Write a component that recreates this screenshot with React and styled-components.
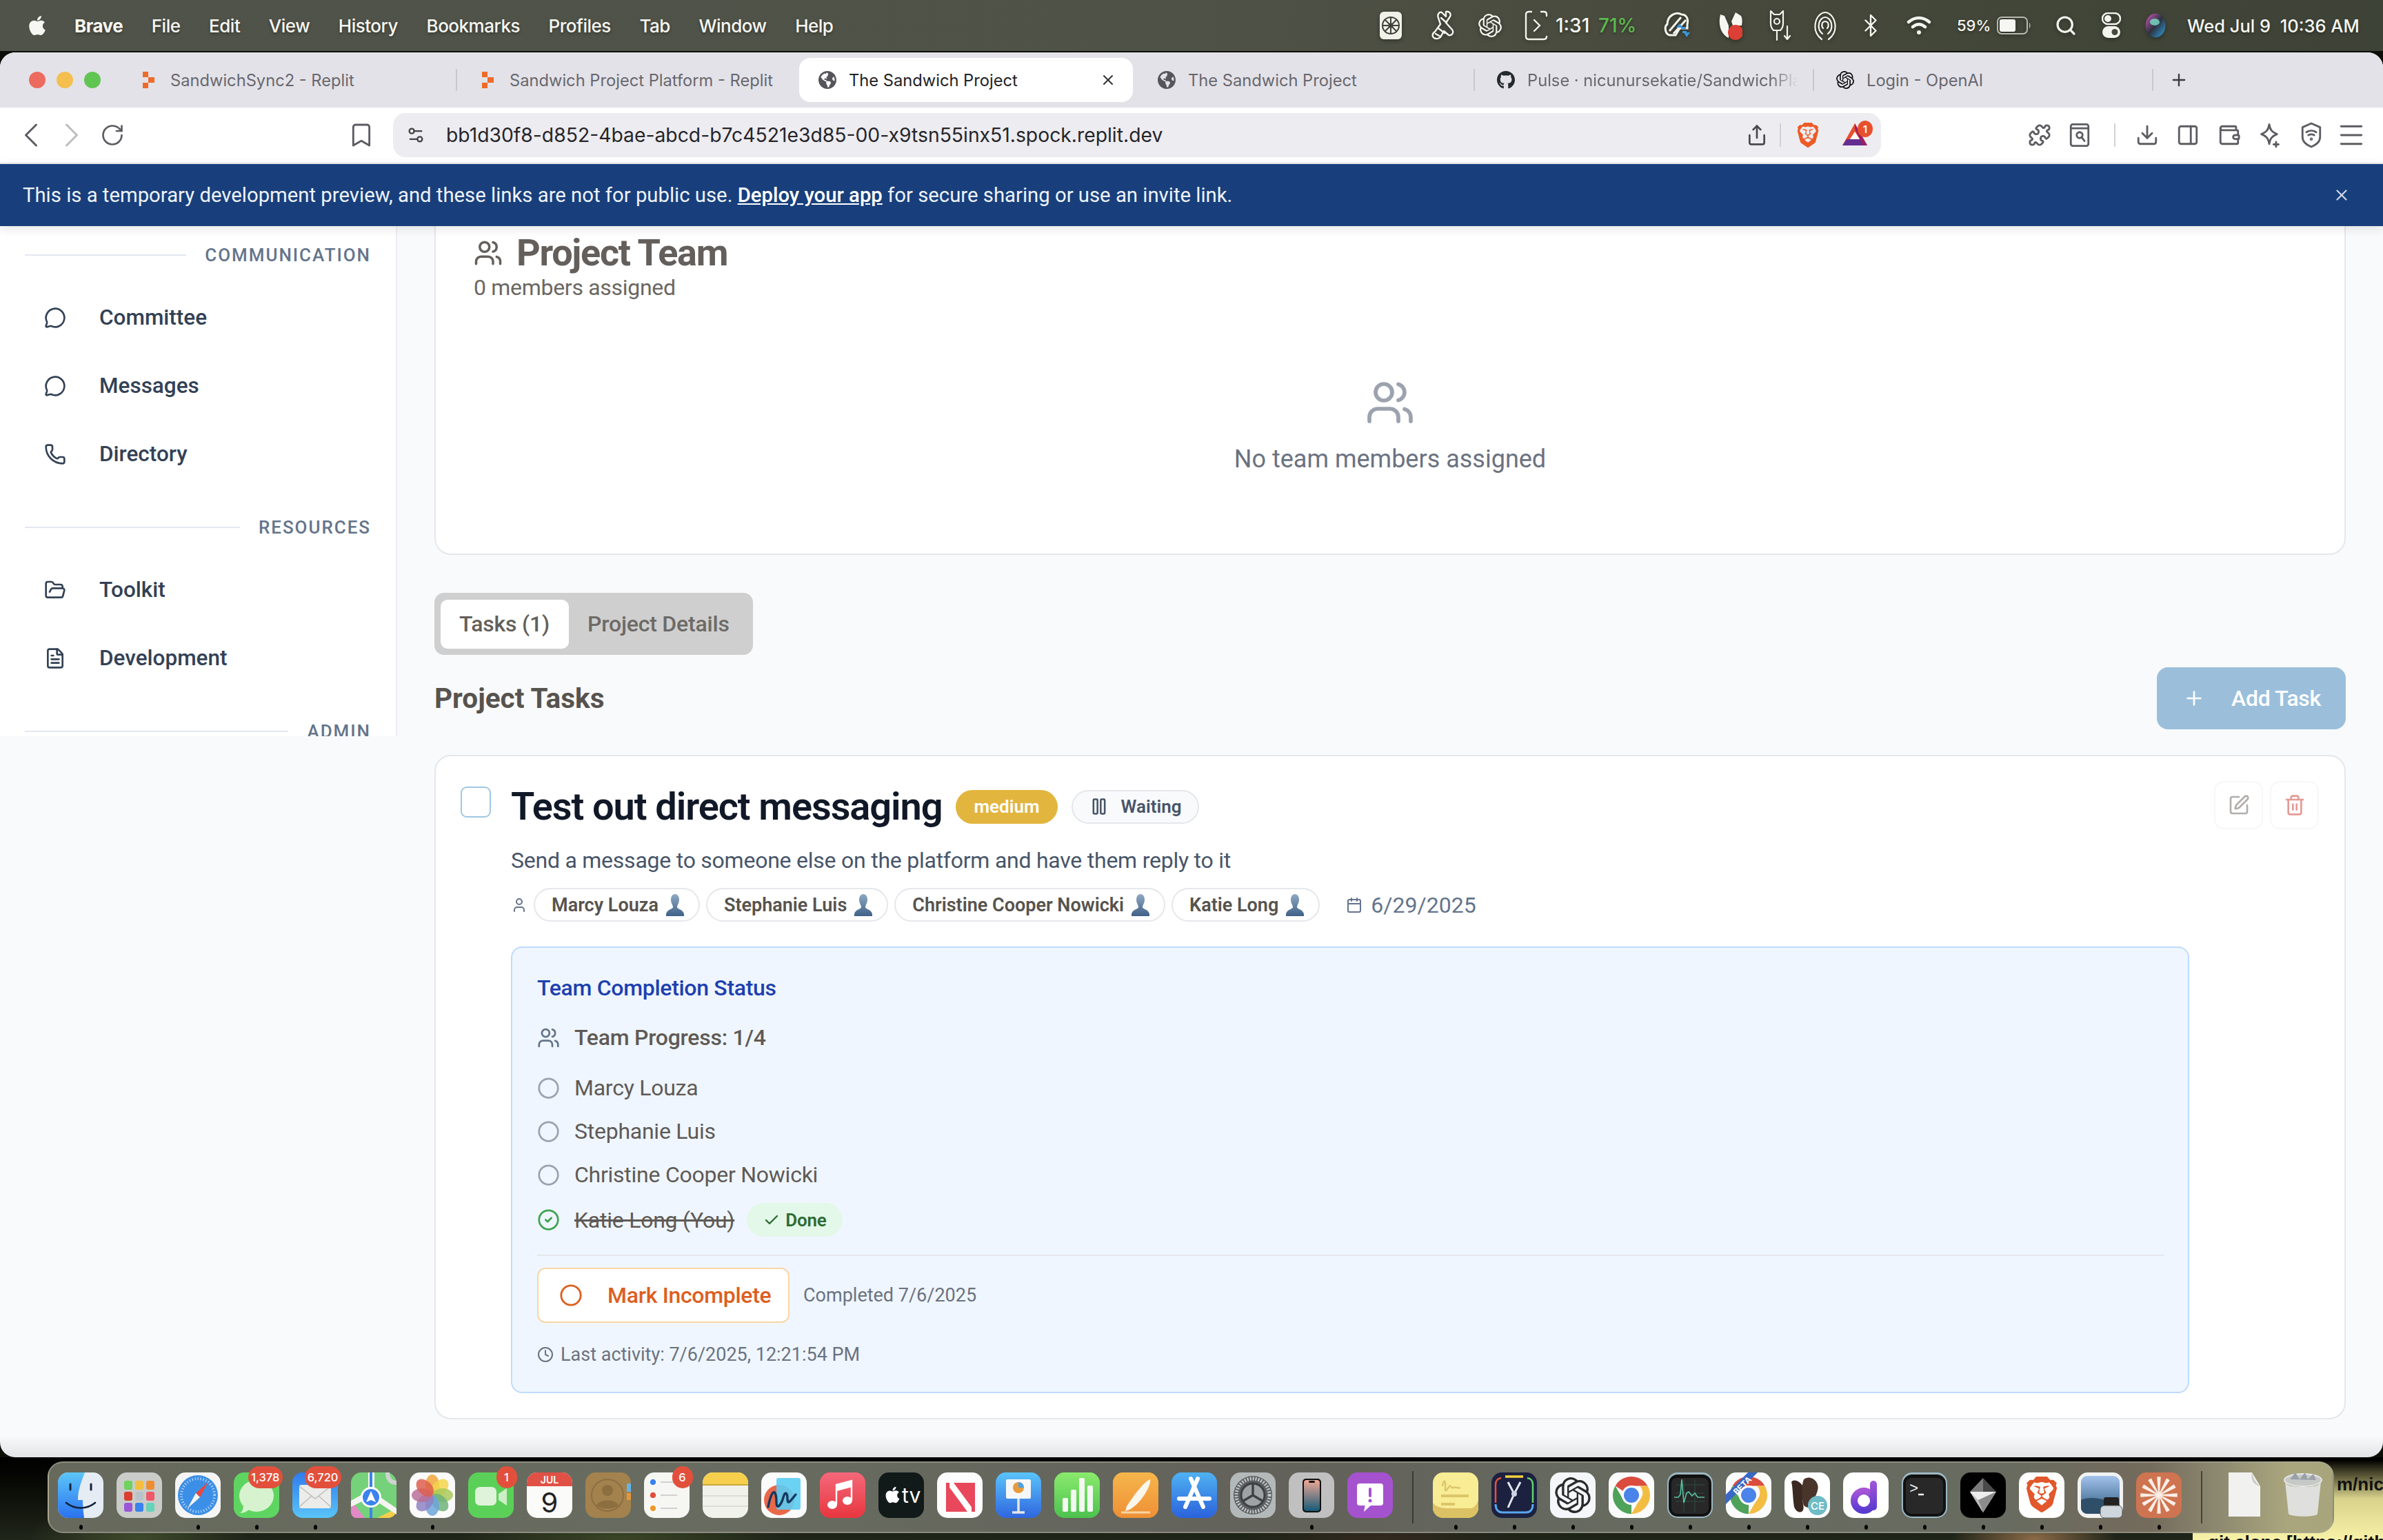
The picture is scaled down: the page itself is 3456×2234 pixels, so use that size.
import React from "react";
import styled, { createGlobalStyle } from "styled-components";
import {
  Bluetooth, Bookmark, Calendar, Check, ChevronLeft, ChevronRight, Circle, CircleCheck, Clock, Download,
  FileText, FolderOpen, Menu, MessageCircle, PanelRight, Pause, Phone, Plus, Puzzle, RotateCw, Search, Settings2,
  Share, SquarePen, Trash2, User, Users, Wallet, X,
} from "lucide-react";
import { FaApple, FaGithub, FaGlobeAmericas } from "react-icons/fa";
import { SiBrave, SiOpenai } from "react-icons/si";

const GlobalStyle = createGlobalStyle`
  html, body {
    margin: 0;
    width: 3456px;
    height: 2234px;
    overflow: hidden;
    background: #000;
  }
  * { box-sizing: border-box; }
`;

const CHROME_FONT = `Inter, "Liberation Sans", sans-serif`;
const APP_FONT = `Roboto, "Liberation Sans", sans-serif`;

const Screen = styled.div`
  position: relative;
  width: 3456px;
  height: 2234px;
  display: flex;
  flex-direction: column;
  overflow: hidden;
  background: #0c0e08;
`;

/* ---- what shows behind the dock ---- */
const Foliage = styled.div`
  position: absolute;
  left: 0;
  right: 276px;
  bottom: 0;
  height: 120px;
  background:
    radial-gradient(ellipse 160px 50px at 200px 118px, #3f4a2c, transparent),
    radial-gradient(ellipse 240px 40px at 900px 118px, #3b4526, transparent),
    radial-gradient(ellipse 200px 30px at 2000px 118px, #33291f, transparent),
    radial-gradient(ellipse 120px 40px at 2950px 118px, #8a6a48, transparent),
    linear-gradient(#000 0, #0b0d07 40%, #20261a 100%);
`;

const BackWindow = styled.div`
  position: absolute;
  left: 3180px;
  right: 0;
  bottom: 0;
  height: 120px;
  background: linear-gradient(#000 4px, #2a2818 14px, #d8d28c 60px, #f8f2a8 100%);
  font: 700 26px "Liberation Sans", sans-serif;
  color: #111;
`;

const BackLine = styled.span`
  position: absolute;
  white-space: nowrap;
  left: ${(p) => p.$x}px;
  top: ${(p) => p.$y}px;
`;

/* ---- macOS menu bar ---- */
const MenuBar = styled.div`
  position: relative;
  flex: none;
  height: 74px;
  display: flex;
  align-items: center;
  padding-left: 38px;
  background: linear-gradient(90deg, #50534a 0%, #4f5246 50%, #45483a 75%, #3e4337 100%);
  color: #f6f6f2;
  font: 500 26px ${CHROME_FONT};
  text-shadow: 0 2px 4px rgba(0, 0, 0, 0.35);
`;

const MenuItems = styled.div`
  display: flex;
  gap: 41.6px;
  margin-left: 38px;
  letter-spacing: -0.5px;
`;

const MenuItem = styled.span`
  font-weight: ${(p) => (p.$bold ? 700 : 500)};
`;

const StatusGroup = styled.div`
  margin-left: auto;
  padding-right: 34px;
  display: flex;
  align-items: center;
`;

const StatusIcon = styled.span`
  flex: none;
  width: ${(p) => p.$w || 36}px;
  height: 44px;
  margin-left: ${(p) => p.$m}px;
  display: flex;
  align-items: center;
  justify-content: center;
  color: #f4f4ee;
  filter: drop-shadow(0 2px 3px rgba(0, 0, 0, 0.35));
`;

const StatusText = styled.span`
  flex: none;
  width: ${(p) => p.$w}px;
  margin-left: ${(p) => p.$m}px;
  color: ${(p) => p.$color || "#f6f6f2"};
  font-size: ${(p) => p.$size || 25.5}px;
  white-space: nowrap;
`;

/* ---- browser window ---- */
const BrowserWindow = styled.div`
  position: relative;
  flex: none;
  margin-top: 2px;
  height: 2038px;
  display: flex;
  flex-direction: column;
  border-radius: 22px;
  overflow: hidden;
  background: #f9fafb;

  &::after {
    content: "";
    position: absolute;
    left: 0;
    right: 0;
    bottom: 0;
    height: 32px;
    background: linear-gradient(rgba(0, 0, 0, 0), rgba(0, 0, 0, 0.09));
    pointer-events: none;
  }
`;

const TabStrip = styled.div`
  flex: none;
  height: 80px;
  display: flex;
  align-items: center;
  padding-left: 42px;
  background: #e3e2e8;
`;

const TrafficLights = styled.div`
  flex: none;
  width: 129px;
  display: flex;
  gap: 16px;
`;

const Light = styled.span`
  width: 24px;
  height: 24px;
  border-radius: 50%;
  background: ${(p) => p.$color};
`;

const Tab = styled.div`
  position: relative;
  flex: none;
  width: 492px;
  height: 64px;
  display: flex;
  align-items: center;
  gap: 18px;
  padding: 0 24px 0 32px;
  font: 400 23.7px ${CHROME_FONT};
  color: ${(p) => (p.$active ? "#232327" : "#68686e")};
  background: ${(p) => (p.$active ? "#fff" : "transparent")};
  border-radius: ${(p) => (p.$active ? "16px" : "0")};
  margin: ${(p) => (p.$active ? "0 4px" : "0")};
  ${(p) => p.$active && "width: 484px; padding-left: 28px;"}

  &::after {
    content: "";
    display: ${(p) => (p.$sep ? "block" : "none")};
    position: absolute;
    right: 0;
    top: 16px;
    width: 2px;
    height: 32px;
    background: #c8c8ce;
  }
`;

const TabTitle = styled.span`
  flex: 1;
  min-width: 0;
  white-space: nowrap;
  overflow: hidden;
  ${(p) => p.$fade && "mask-image: linear-gradient(90deg, #000 90%, transparent 100%);"}
`;

const Favicon = styled.span`
  flex: none;
  width: 26px;
  height: 32px;
  display: flex;
  align-items: center;
  justify-content: center;
  color: #55555b;
`;

const NewTab = styled.span`
  margin-left: 23px;
  display: flex;
  color: #3a3a3f;
`;

const Toolbar = styled.div`
  flex: none;
  height: 80px;
  display: flex;
  align-items: center;
  padding-left: 27px;
  background: #fff;
`;

const ToolIcon = styled.span`
  flex: none;
  width: ${(p) => p.$w || 36}px;
  height: 40px;
  margin-left: ${(p) => p.$m || 0}px;
  display: flex;
  align-items: center;
  justify-content: center;
  color: ${(p) => p.$color || "#5c5c62"};

  svg { flex: none; }
`;

const ToolSep = styled.span`
  flex: none;
  width: 2px;
  height: 34px;
  margin-left: ${(p) => p.$m}px;
  background: #d2d2d6;
`;

const UrlBar = styled.div`
  flex: none;
  width: 2158px;
  height: 64px;
  margin-left: 28px;
  padding: 0 20px 0 18px;
  display: flex;
  align-items: center;
  border-radius: 18px;
  background: #edecf1;
`;

const UrlText = styled.span`
  margin-left: 29px;
  font: 400 28.3px ${CHROME_FONT};
  color: #26262a;
  white-space: nowrap;
`;

const UrlActions = styled.div`
  margin-left: auto;
  display: flex;
  align-items: center;
`;

const AlertBadge = styled.span`
  position: absolute;
  top: -4px;
  right: -8px;
  width: 22px;
  height: 24px;
  border-radius: 50%;
  background: #e8502c;
  color: #fff;
  font: 600 15px ${CHROME_FONT};
  display: flex;
  align-items: center;
  justify-content: center;
`;

const BatWrap = styled.span`
  position: relative;
  display: flex;
`;

const PreviewBanner = styled.div`
  position: relative;
  z-index: 2;
  flex: none;
  height: 92px;
  display: flex;
  align-items: center;
  justify-content: space-between;
  padding: 0 47px 0 33px;
  border-top: 2px solid #e4e4e6;
  background: #183f7c;
  box-shadow: 0 4px 14px rgba(0, 0, 0, 0.1);
  font: 400 29.3px ${APP_FONT};
  color: #eef2f8;

  a {
    color: #fff;
    text-decoration: underline;
    font-weight: 500;
  }
`;

const AppBody = styled.div`
  flex: 1;
  min-height: 0;
  display: flex;
  align-items: flex-start;
  font-family: ${APP_FONT};
`;

/* ---- sidebar ---- */
const Sidebar = styled.nav`
  flex: none;
  width: 576px;
  height: 740px;
  overflow: hidden;
  background: #fff;
  border-right: 2px solid #eceef1;
`;

const SectionLabel = styled.div`
  height: 40px;
  margin-top: ${(p) => p.$mt}px;
  margin-bottom: 21px;
  padding: 0 36px 0 36px;
  display: flex;
  align-items: center;
  gap: 27px;
  font-size: 26px;
  font-weight: 500;
  letter-spacing: 1.95px;
  color: #64748b;

  &::before {
    content: "";
    flex: 1;
    height: 2px;
    background: #e2e8f0;
  }
`;

const NavItem = styled.div`
  height: 99px;
  padding-left: 64px;
  display: flex;
  align-items: center;
  gap: 48px;
  font-size: 31.5px;
  font-weight: 500;
  color: #334155;
`;

/* ---- main column ---- */
const Main = styled.main`
  flex: 1;
  min-width: 0;
  padding: 0 54px;
`;

const TeamCard = styled.section`
  height: 477px;
  padding: 11px 0 0 55px;
  border: 2px solid #e5e7eb;
  border-top: 0;
  border-radius: 0 0 24px 24px;
  background: #fff;
`;

const TeamHeading = styled.h2`
  margin: 0;
  height: 56px;
  display: flex;
  align-items: center;
  gap: 20px;
  font-size: 54px;
  line-height: 56px;
  font-weight: 700;
  letter-spacing: -1.3px;
  color: #645f5b;
`;

const MembersCount = styled.p`
  margin: 2px 0 0;
  font-size: 32px;
  line-height: 40px;
  letter-spacing: -0.3px;
  color: #6b6762;
`;

const EmptyState = styled.div`
  margin: 111px 0 0 -55px;
  display: flex;
  flex-direction: column;
  align-items: center;
  gap: 22px;
  color: #9ca3af;
`;

const EmptyText = styled.div`
  font-size: 36px;
  line-height: 48px;
  color: #6b7280;
`;

const TabsList = styled.div`
  margin-top: 55px;
  width: 462px;
  height: 90px;
  padding: 9px;
  display: flex;
  align-items: center;
  border-radius: 14px;
  background: #cfcfcf;
`;

const TabButton = styled.div`
  flex: none;
  height: 71px;
  width: ${(p) => (p.$active ? 186 : 258)}px;
  padding: 0 27px;
  display: flex;
  align-items: center;
  border-radius: 10px;
  font-size: 32px;
  font-weight: 500;
  letter-spacing: -0.2px;
  white-space: nowrap;
  color: ${(p) => (p.$active ? "#645f5b" : "#6d6a66")};
  background: ${(p) => (p.$active ? "#fff" : "transparent")};
`;

const TasksHeader = styled.div`
  margin-top: 18px;
  display: flex;
  align-items: center;
  justify-content: space-between;
`;

const TasksTitle = styled.h3`
  margin: 0;
  font-size: 40.5px;
  font-weight: 700;
  color: #57534e;
`;

const AddTaskButton = styled.div`
  width: 274px;
  height: 90px;
  padding-left: 38px;
  display: flex;
  align-items: center;
  gap: 38px;
  border-radius: 16px;
  background: #9bbfdb;
  color: #fff;
  font-size: 32px;
  font-weight: 500;
  letter-spacing: -0.3px;
`;

const TaskCard = styled.article`
  margin-top: 37px;
  height: 964px;
  padding: 36px 37px 0 36px;
  display: flex;
  align-items: flex-start;
  border: 2px solid #e5e7eb;
  border-radius: 24px;
  background: #fff;
`;

const CheckBox = styled.span`
  flex: none;
  width: 44px;
  height: 45px;
  margin: 8px 29px 0 0;
  border: 2px solid #9fc8e2;
  border-radius: 9px;
`;

const TaskBody = styled.div`
  flex: 1;
  min-width: 0;
  margin-top: 9px;
`;

const TaskActions = styled.div`
  flex: none;
  margin-left: 36px;
  display: flex;
  gap: 10px;
`;

const ActionButton = styled.span`
  width: 71px;
  height: 70px;
  display: flex;
  align-items: center;
  justify-content: center;
  border: 2px solid #f7f7f8;
  border-radius: 14px;
  color: ${(p) => p.$color};
`;

const TitleRow = styled.div`
  height: 56px;
  display: flex;
  align-items: center;
  gap: 20px;
`;

const TaskTitle = styled.h4`
  margin: 0;
  font-size: 56px;
  line-height: 56px;
  font-weight: 600;
  letter-spacing: -1.1px;
  color: #111827;
  white-space: nowrap;
`;

const Pill = styled.span`
  height: 49px;
  display: inline-flex;
  align-items: center;
  border-radius: 25px;
  font-size: 26px;
  font-weight: 600;
  white-space: nowrap;
`;

const PriorityPill = styled(Pill)`
  padding: 0 26px;
  background: #e2b53e;
  color: #fff;
`;

const StatusPill = styled(Pill)`
  padding: 0 24px;
  gap: 18px;
  border: 2px solid #e5e7eb;
  background: #f9fafb;
  color: #475569;
`;

const Description = styled.p`
  margin: 28px 0 0;
  font-size: 32px;
  line-height: 44px;
  letter-spacing: -0.24px;
  color: #475569;
`;

const AssigneeRow = styled.div`
  margin-top: 18px;
  height: 49px;
  display: flex;
  align-items: center;
  gap: 9px;
  color: #64748b;
`;

const PersonChip = styled(Pill)`
  padding: 0 20px 0 24px;
  gap: 10px;
  border: 2px solid #e5e7eb;
  background: #fff;
  font-size: 27px;
  color: #57534e;
`;

const DueDate = styled.span`
  margin-left: 29px;
  display: flex;
  align-items: center;
  gap: 12px;
  font-size: 32px;
  color: #64748b;
`;

const CompletionBox = styled.section`
  margin-top: 36px;
  height: 648px;
  padding: 38px 34px 0 36px;
  border: 2px solid #bfdbfe;
  border-radius: 16px;
  background: #eff6ff;
`;

const CompletionTitle = styled.div`
  font-size: 32px;
  line-height: 40px;
  font-weight: 500;
  letter-spacing: -0.3px;
  color: #1e40af;
`;

const ProgressLine = styled.div`
  margin-top: 32px;
  height: 40px;
  display: flex;
  align-items: center;
  gap: 21px;
  font-size: 32px;
  font-weight: 500;
  letter-spacing: -0.25px;
  color: #5f5a56;
`;

const MemberList = styled.div`
  margin-top: 33px;
  display: flex;
  flex-direction: column;
  gap: 23px;
`;

const MemberRow = styled.div`
  min-height: ${(p) => (p.$done ? 49 : 40)}px;
  margin-top: ${(p) => (p.$done ? -2 : 0)}px;
  display: flex;
  align-items: center;
  gap: 21px;
  font-size: 32px;
  letter-spacing: -0.25px;
  color: #5f5a56;
`;

const MemberName = styled.span`
  text-decoration: ${(p) => (p.$done ? "line-through" : "none")};
`;

const DonePill = styled(Pill)`
  margin-left: -3px;
  padding: 0 24px;
  gap: 8px;
  background: #e3f8e8;
  color: #2e6b34;
`;

const Divider = styled.hr`
  margin: 26px 0 17px;
  border: 0;
  height: 2px;
  background: #e5e7eb;
`;

const CompleteRow = styled.div`
  display: flex;
  align-items: center;
  gap: 20px;
`;

const MarkButton = styled.div`
  width: 366px;
  height: 80px;
  padding-left: 30px;
  display: flex;
  align-items: center;
  gap: 36px;
  border: 2px solid #fbd5a5;
  border-radius: 12px;
  background: #fff;
  font-size: 32px;
  font-weight: 500;
  letter-spacing: -0.3px;
  color: #dd5f1f;
`;

const MutedText = styled.span`
  font-size: 27px;
  color: #6b7280;
`;

const LastActivity = styled(MutedText)`
  margin-top: 28px;
  height: 36px;
  display: flex;
  align-items: center;
  gap: 10px;
`;

/* ---- dock ---- */
const Dock = styled.div`
  position: relative;
  flex: none;
  margin: 6px 0 0 69px;
  width: 3316px;
  height: 104px;
  padding: 14px 0 0 3.5px;
  display: flex;
  border: 2px solid rgba(170, 170, 155, 0.55);
  border-radius: 22px;
  background: linear-gradient(90deg, #66695c 0%, #686c60 30%, #62615a 55%, #666a5f 68%, #676b60 85%, #746b5c 92%, #8d8970 95%, #a9a67e 98%, #a8a57c 100%);
`;

const DockSlot = styled.div`
  position: relative;
  flex: none;
  width: 85px;
  display: flex;
  flex-direction: column;
  align-items: center;
`;

const DockDivider = styled.span`
  flex: none;
  width: 2px;
  height: 76px;
  margin: -2px 18.5px 0;
  background: rgba(40, 40, 34, 0.7);
`;

const RunDot = styled.span`
  width: 5px;
  height: 7px;
  margin-top: 10px;
  border-radius: 50%;
  background: #000;
`;

const DockBadge = styled.span`
  position: absolute;
  top: -9px;
  right: ${(p) => p.$right || 5}px;
  min-width: 30px;
  height: 32px;
  padding: 0 4px;
  display: flex;
  align-items: center;
  justify-content: center;
  border-radius: 16px;
  background: #e2503c;
  color: #fff;
  font: 500 16.5px ${CHROME_FONT};
`;

/* ---- small drawings ---- */
const ReplitMark = () => (
  <svg width="18" height="24" viewBox="0 0 18 24" fill="#ee6b2a">
    <path d="M0 0h8v8H0zM8 8h9v8H8zM0 16h8v8H0z" />
  </svg>
);

const BatIcon = () => (
  <svg width="36" height="34" viewBox="0 0 36 34">
    <path d="M18 0 36 32H0z" fill="#e8502c" />
    <path d="M18 12 27 26H9z" fill="#fff" />
    <path d="M0 32l6-9h24l6 9z" fill="#662d91" />
    <path d="M18 0l18 32h-6L18 8z" fill="#9e1f63" />
  </svg>
);

const Stroke = ({ children, w = 34, h = 34, vb = "0 0 24 24", sw = 2 }) => (
  <svg width={w} height={h} viewBox={vb} fill="none" stroke="currentColor" strokeWidth={sw} strokeLinecap="round" strokeLinejoin="round">
    {children}
  </svg>
);

const StatusIcons = {
  wheel: (
    <svg width="32" height="40" viewBox="0 0 32 40">
      <rect width="32" height="40" rx="6" fill="#f1f1ea" />
      <circle cx="16" cy="20" r="12" fill="none" stroke="#3f4236" strokeWidth="2" />
      <circle cx="16" cy="20" r="3.5" fill="#3f4236" />
      <path d="M16 8v24M4 20h24M7.5 11.5l17 17M24.5 11.5l-17 17" stroke="#3f4236" strokeWidth="2" />
    </svg>
  ),
  knot: (
    <svg width="34" height="44" viewBox="0 0 34 44" fill="none" stroke="#f4f4ee" strokeWidth="2.4" strokeLinecap="round" strokeLinejoin="round">
      <path d="M21 2c5-1 8 3 6 7l-6 9 9 10c3 4 0 9-5 8l-7-6-5 9c-3 3-9 3-11-1-1-3 0-5 3-7l8-11-3-9c-2-5 1-9 5-8l6 6z" />
      <path d="M14 11l8 7M10 26l9 7M6 34l7 4" />
    </svg>
  ),
  replay: (
    <svg width="34" height="44" viewBox="0 0 34 44" fill="none" stroke="currentColor" strokeWidth="2.4" strokeLinecap="round">
      <path d="M10 2H6C3 2 2 4 2 6v32c0 3 1 4 4 4h22c3 0 4-1 4-4M24 2h4c3 0 4 2 4 4v2" />
      <path d="m14 14 8 8-8 8" />
    </svg>
  ),
  cloud: (
    <svg width="46" height="44" viewBox="0 0 46 44">
      <path d="M10 36C3 35 1 24 6 20 6 8 18 1 27 6c7 0 10 7 8 14v6H24l-6 10z" fill="none" stroke="#f4f4ee" strokeWidth="3" />
      <path d="M9 30 26 10M15 34 33 14" stroke="#f4f4ee" strokeWidth="3" />
      <path d="M28 25h-9l5-6zM30 32h9l-5 7z" fill="#3b97de" />
      <path d="M26 24h7v3h-7zM28 30h6v3h-6z" fill="#3b97de" />
    </svg>
  ),
  malware: (
    <svg width="34" height="44" viewBox="0 0 34 44">
      <path d="M2 6c-3 12-1 28 12 34V22L8 8z" fill="#f6f6f2" />
      <path d="M32 8c2 4 2 8 1 14H20l-2-6 6-13z" fill="#f6f6f2" />
      <circle cx="24" cy="32" r="11" fill="#dc3f35" />
    </svg>
  ),
  cat: (
    <svg width="34" height="46" viewBox="0 0 34 46" fill="none" stroke="#f4f4ee" strokeWidth="2.2" strokeLinecap="round" strokeLinejoin="round">
      <path d="M4 2l5 5h8l5-5v18c0 6-2 8-4 10H8c-2-2-4-4-4-10z" />
      <circle cx="13" cy="17" r="4" />
      <path d="M13 30v14M28 24v18M24 38l4 5 4-5" />
    </svg>
  ),
  airdrop: (
    <svg width="32" height="44" viewBox="0 0 32 44" fill="none" stroke="#f4f4ee" strokeWidth="2.2" strokeLinecap="round">
      <path d="M11 42C3 36 0 28 2 18 4 8 11 3 16 3s12 5 14 15c2 10-1 18-9 24" />
      <path d="M12 34c-5-4-6-10-5-15 1-5 5-9 9-9s8 4 9 9c1 5 0 11-5 15" />
      <path d="M13 26c-2-2-2-5-1-8 1-1 2-2 4-2s3 1 4 2c1 3 1 6-1 8" />
    </svg>
  ),
  wifi: (
    <svg width="36" height="30" viewBox="0 0 36 30" fill="none" stroke="#f4f4ee" strokeWidth="4.4" strokeLinecap="round">
      <path d="M3 10c9-8 21-8 30 0M9 17c6-5 12-5 18 0" />
      <circle cx="18" cy="25" r="3" fill="#f4f4ee" stroke="none" />
    </svg>
  ),
  battery: (
    <svg width="50" height="26" viewBox="0 0 50 26">
      <rect x="1" y="1" width="43" height="24" rx="6" fill="none" stroke="#b8b9b0" strokeWidth="2" />
      <rect x="4" y="4" width="23" height="18" rx="3" fill="#f6f6f2" />
      <path d="M47 9c2 1 2 7 0 8z" fill="#b8b9b0" />
    </svg>
  ),
  control: (
    <svg width="28" height="38" viewBox="0 0 28 38">
      <rect x="1" y="1" width="26" height="16" rx="8" fill="none" stroke="#f4f4ee" strokeWidth="2.4" />
      <circle cx="9" cy="9" r="5" fill="#f4f4ee" />
      <rect x="1" y="20" width="26" height="17" rx="8.5" fill="#f4f4ee" />
      <circle cx="19" cy="28.5" r="4.5" fill="#45483a" />
    </svg>
  ),
  siri: (
    <svg width="30" height="36" viewBox="0 0 30 36">
      <defs>
        <linearGradient id="siriA" x1="0" y1="0" x2="1" y2="1">
          <stop offset="0" stopColor="#d45ac0" />
          <stop offset="0.5" stopColor="#2e3140" />
          <stop offset="1" stopColor="#2fa4e0" />
        </linearGradient>
      </defs>
      <ellipse cx="15" cy="18" rx="14.5" ry="17.5" fill="url(#siriA)" />
      <ellipse cx="14" cy="13" rx="7" ry="5" fill="#7be0c8" opacity="0.8" />
    </svg>
  ),
};

const ReaderIcon = () => (
  <Stroke w={34} h={38} vb="0 0 24 26">
    <rect x="3" y="2" width="18" height="22" rx="2" />
    <path d="M3 6h18" />
    <circle cx="12" cy="13" r="3" />
    <path d="m14 15 3 4" />
  </Stroke>
);

const SparkleIcon = () => (
  <Stroke w={34} h={38} vb="0 0 24 26">
    <path d="M12 2c1 6 3 8 8 10-5 2-7 4-8 10-1-6-3-8-8-10 5-2 7-4 8-10z" />
    <path d="M19 20v5M16.5 22.5h5" />
  </Stroke>
);

const ShieldIcon = () => (
  <Stroke w={34} h={40} vb="0 0 24 28">
    <path d="M12 2 21 6v10c0 5-4 8-9 10-5-2-9-5-9-10V6z" />
    <path d="M7 11c3-2 7-2 10 0M9 14c2-1 4-1 6 0" />
    <circle cx="12" cy="18" r="0.6" />
  </Stroke>
);

const PersonEmoji = () => (
  <svg width="28" height="32" viewBox="0 0 28 32">
    <defs>
      <linearGradient id="bust" x1="0" y1="0" x2="0" y2="1">
        <stop offset="0" stopColor="#8fa9c4" />
        <stop offset="1" stopColor="#3f6288" />
      </linearGradient>
    </defs>
    <path d="M14 0c4 0 6 4 6 8 0 5-3 8-3 11 0 3 9 3 10 10v3H1v-3c1-7 10-7 10-10 0-3-3-6-3-11 0-4 2-8 6-8z" fill="url(#bust)" />
  </svg>
);

const Tile = ({ children, fill }) => (
  <svg width="66" height="66" viewBox="0 0 66 66" style={{ display: "block" }}>
    <rect width="66" height="66" rx="15" fill={fill} />
    {children}
  </svg>
);

const Grad = ({ id, a, b, x2 = 0, y2 = 1 }) => (
  <defs>
    <linearGradient id={id} x1="0" y1="0" x2={x2} y2={y2}>
      <stop offset="0" stopColor={a} />
      <stop offset="1" stopColor={b} />
    </linearGradient>
  </defs>
);

const ChromeWheel = () => (
  <g>
    <path d="M33 6a27 27 0 0 1 23.4 13.5H33a13.5 13.5 0 0 0-12 7.4L9.6 19.5A27 27 0 0 1 33 6z" fill="#db4b3e" />
    <path d="M56.4 19.5A27 27 0 0 1 33 60l11.7-20.2a13.5 13.5 0 0 0 0-20.3z" fill="#f3bd42" />
    <path d="M9.6 19.5 21 39.5a13.5 13.5 0 0 0 12 7l-0 13.5A27 27 0 0 1 9.6 19.5z" fill="#4ea25a" />
    <circle cx="33" cy="33" r="14" fill="#fff" />
    <circle cx="33" cy="33" r="11" fill="#4a84ea" />
  </g>
);

const TerminalScreen = ({ children }) => (
  <Tile fill="#9db8c4">
    <rect x="2" y="3" width="62" height="61" rx="13" fill="#111" />
    <rect x="6" y="8" width="54" height="52" rx="8" fill="#282828" />
    {children}
  </Tile>
);

const dockApps = [
  {
    dot: true,
    art: (
      <Tile fill="#e6ecf4">
        <Grad id="fnd" a="#5cc6f9" b="#2a72ef" />
        <path d="M15 0h24c-6 16-10 26-10 40h7c0 10 1 18 2 26H15A15 15 0 0 1 0 51V15A15 15 0 0 1 15 0z" fill="url(#fnd)" />
        <path d="M18 17v8M48 17v8" stroke="#14233c" strokeWidth="3" strokeLinecap="round" />
        <path d="M12 44c12 10 30 10 42 0" fill="none" stroke="#14233c" strokeWidth="2.6" strokeLinecap="round" />
      </Tile>
    ),
  },
  {
    art: (
      <Tile fill="#c9ccc8">
        {["#6fd25c", "#f5be3c", "#ee8e34", "#d9402f", "#b9c2c6", "#ef5a6a", "#9a55d8", "#3a82ee", "#66d3b8"].map((c, i) => (
          <rect key={c} x={11 + (i % 3) * 16} y={12 + Math.floor(i / 3) * 16} width="12" height="13" rx="3" fill={c} />
        ))}
      </Tile>
    ),
  },
  {
    dot: true,
    art: (
      <Tile fill="#f5f5f5">
        <circle cx="33" cy="33" r="29" fill="#3c8fe6" />
        <circle cx="33" cy="33" r="24" fill="none" stroke="#d5e7fa" strokeWidth="4" strokeDasharray="1 3" />
        <path d="M48 14 30 30l6 6z" fill="#e8473b" />
        <path d="M18 52 30 30l6 6z" fill="#f4f4f4" />
      </Tile>
    ),
  },
  {
    dot: true,
    badge: "1,378",
    art: (
      <Tile fill="#5fd561">
        <ellipse cx="33" cy="34" rx="25" ry="23" fill="#d6f2cf" />
        <path d="M14 48c0 6-2 9-5 11 6 0 11-3 14-6z" fill="#d6f2cf" />
      </Tile>
    ),
  },
  {
    dot: true,
    badge: "6,720",
    art: (
      <Tile fill="#3b8af0">
        <Grad id="mail" a="#2f7bee" b="#5ac4f8" />
        <rect width="66" height="66" rx="15" fill="url(#mail)" />
        <rect x="10" y="18" width="46" height="34" rx="3" fill="#ececea" />
        <path d="m10 20 23 18 23-18M10 50l18-16M56 50 38 34" fill="none" stroke="#bdbdb9" strokeWidth="1.5" />
      </Tile>
    ),
  },
  {
    art: (
      <Tile fill="#75d27a">
        <path d="M0 40 20 66H8A8 8 0 0 1 0 58z" fill="#e38ac6" />
        <path d="M38 66h16c6 0 12-5 12-12v-2z" fill="#f3cf4b" />
        <path d="M25 0h9v30l32 22v9L28 36 0 50v-9l25-14z" fill="#f4f4f0" />
        <path d="M27 0h4v66h-4z" fill="#3b82ee" />
        <path d="M50 0c0 12 6 18 16 18v-6c-6 0-10-5-10-12z" fill="#cfd3cf" />
        <circle cx="29" cy="36" r="15" fill="#fff" />
        <circle cx="29" cy="36" r="12" fill="#3b82ee" />
        <path d="M29 27 36 43l-7-3-7 3z" fill="#fff" />
      </Tile>
    ),
  },
  {
    dot: true,
    art: (
      <Tile fill="#fbfbfb">
        {[
          ["#f0a63c", 0], ["#f3d54a", 45], ["#a9c95a", 90], ["#6fb37a", 135],
          ["#6ca6dc", 180], ["#8f81c4", 225], ["#b96f98", 270], ["#dd5f4f", 315],
        ].map(([c, r]) => (
          <ellipse key={r} cx="33" cy="18" rx="10" ry="15" fill={c} opacity="0.85" transform={`rotate(${r} 33 33)`} />
        ))}
      </Tile>
    ),
  },
  {
    badge: "1",
    badgeRight: 0,
    art: (
      <Tile fill="#5bd058">
        <rect x="10" y="21" width="31" height="27" rx="7" fill="#dff3da" />
        <path d="m44 31 12-8v25l-12-8z" fill="#cdeec6" />
      </Tile>
    ),
  },
  {
    art: (
      <Tile fill="#fbfbf9">
        <path d="M0 20V15A15 15 0 0 1 15 0h36a15 15 0 0 1 15 15v5z" fill="#e05045" />
        <text x="33" y="16" textAnchor="middle" fontFamily="Inter" fontWeight="600" fontSize="14" fill="#fff">JUL</text>
        <text x="33" y="58" textAnchor="middle" fontFamily="Inter" fontWeight="400" fontSize="40" fill="#222">9</text>
      </Tile>
    ),
  },
  {
    art: (
      <Tile fill="#a3824e">
        <rect x="60" y="16" width="6" height="12" fill="#68b3e6" />
        <rect x="60" y="30" width="6" height="10" fill="#e5963c" />
        <circle cx="32" cy="33" r="23" fill="none" stroke="#8c6e40" strokeWidth="2" />
        <circle cx="32" cy="26" r="8" fill="#8c6e40" />
        <path d="M16 48c4-10 28-10 32 0-8 6-24 6-32 0z" fill="#8c6e40" />
      </Tile>
    ),
  },
  {
    badge: "6",
    badgeRight: 0,
    art: (
      <Tile fill="#f6f6f3">
        {[["#3a82ee", 14], ["#e2503c", 33], ["#ee9a2e", 52]].map(([c, y]) => (
          <g key={y}>
            <circle cx="13" cy={y} r="5" fill={c} stroke="#fff" strokeWidth="1.5" />
            <path d={`M24 ${y}h24`} stroke="#c8c8c6" strokeWidth="1.6" />
          </g>
        ))}
      </Tile>
    ),
  },
  {
    art: (
      <Tile fill="#f2f2ec">
        <path d="M0 18V15A15 15 0 0 1 15 0h36a15 15 0 0 1 15 15v3z" fill="#f6d04d" />
        <path d="M0 18h66" stroke="#c9a83b" strokeWidth="2" />
        <path d="M0 34h66M0 49h66" stroke="#d6d6d0" strokeWidth="1.5" />
      </Tile>
    ),
  },
  {
    art: (
      <Tile fill="#fbfbfb">
        <circle cx="26" cy="40" r="22" fill="#e9684a" />
        <rect x="22" y="8" width="35" height="46" rx="3" fill="#5ccdf3" opacity="0.9" />
        <path d="M10 50c6-30 12-24 12-8s8 2 10-6 6-8 6 2 4 4 12-6" fill="none" stroke="#14385e" strokeWidth="3.4" strokeLinecap="round" />
      </Tile>
    ),
  },
  {
    art: (
      <Tile fill="#ea4050">
        <Grad id="music" a="#f4697a" b="#e8363f" />
        <rect width="66" height="66" rx="15" fill="url(#music)" />
        <path d="M24 18v28M46 12v28M24 18l22-6v8l-22 6z" fill="#fff" stroke="#fff" strokeWidth="2.4" />
        <ellipse cx="18" cy="47" rx="7" ry="6" fill="#fff" />
        <ellipse cx="40" cy="41" rx="7" ry="6" fill="#fff" />
      </Tile>
    ),
  },
  {
    art: (
      <Tile fill="#111a19">
        <FaApple x="7" y="19" size={27} color="#fff" />
        <text x="34" y="44" fontFamily="Inter" fontSize="30" fontWeight="400" fill="#fff">tv</text>
      </Tile>
    ),
  },
  {
    art: (
      <Tile fill="#fcfcfc">
        <rect x="13" y="15" width="42" height="42" rx="3" fill="#e8475c" />
        <path d="M13 15h11l31 42H44z" fill="#fff" />
        <path d="M13 15h5v42h-5zM50 15h5v42h-5z" fill="#e8475c" />
      </Tile>
    ),
  },
  {
    art: (
      <Tile fill="#3f85ee">
        <Grad id="key" a="#5ac4fa" b="#2f66de" />
        <rect width="66" height="66" rx="15" fill="url(#key)" />
        <rect x="15" y="10" width="36" height="28" rx="2" fill="#f7f7f7" />
        <circle cx="33" cy="22" r="8" fill="#e99a3b" />
        <path d="M33 14a8 8 0 0 1 8 8h-8z" fill="#4aa2e8" />
        <path d="M33 38v20M24 58h18" stroke="#e6e6e6" strokeWidth="3.5" />
      </Tile>
    ),
  },
  {
    art: (
      <Tile fill="#5fd152">
        <Grad id="num" a="#8aea6d" b="#4cc24e" />
        <rect width="66" height="66" rx="15" fill="url(#num)" />
        <rect x="12" y="37" width="8" height="20" rx="2" fill="#f3f9f0" />
        <rect x="24" y="25" width="8" height="32" rx="2" fill="#f3f9f0" />
        <rect x="36" y="8" width="8" height="49" rx="2" fill="#f3f9f0" />
        <rect x="48" y="19" width="8" height="38" rx="2" fill="#f3f9f0" />
      </Tile>
    ),
  },
  {
    art: (
      <Tile fill="#f29a38">
        <Grad id="pages" a="#f6b64c" b="#ef8f35" />
        <rect width="66" height="66" rx="15" fill="url(#pages)" />
        <path d="M54 10c2 8-12 34-30 44l-6 2 2-7C30 34 44 14 54 10z" fill="#fbf6ec" />
        <path d="M12 58h42" stroke="#f8d6a6" strokeWidth="3" />
      </Tile>
    ),
  },
  {
    art: (
      <Tile fill="#3f8bee">
        <Grad id="store" a="#4fb2f2" b="#2b62dc" />
        <rect width="66" height="66" rx="15" fill="url(#store)" />
        <path d="m28 9 18 41M38 9 20 50M11 38h44" stroke="#fff" strokeWidth="6" strokeLinecap="round" />
      </Tile>
    ),
  },
  {
    art: (
      <Tile fill="#b3b8b8">
        <circle cx="33" cy="33" r="28" fill="#5b5f61" />
        <circle cx="33" cy="33" r="24" fill="none" stroke="#c9cbcb" strokeWidth="5" strokeDasharray="2 2" />
        <circle cx="33" cy="33" r="17" fill="#9ea2a3" stroke="#3e4143" strokeWidth="3" />
        <path d="M33 33V16M33 33 18 42M33 33l15 9" stroke="#3e4143" strokeWidth="3.4" />
      </Tile>
    ),
  },
  {
    dot: true,
    art: (
      <Tile fill="#c0c0c0">
        <Grad id="phone" a="#f0a995" b="#155a78" />
        <rect x="20" y="9" width="27" height="49" rx="5" fill="#111" />
        <rect x="22" y="11" width="23" height="45" rx="4" fill="url(#phone)" />
        <rect x="29" y="12" width="9" height="3" rx="1.5" fill="#111" />
      </Tile>
    ),
  },
  {
    art: (
      <Tile fill="#a552cf">
        <rect x="14" y="16" width="38" height="32" rx="4" fill="#fff" />
        <path d="m26 46-2 11 11-10z" fill="#fff" />
        <rect x="31" y="22" width="4" height="14" rx="2" fill="#a552cf" />
        <circle cx="33" cy="41" r="2.5" fill="#a552cf" />
      </Tile>
    ),
  },
  { divider: true },
  {
    dot: true,
    art: (
      <Tile fill="#f8ec95">
        <path d="M0 44c6 8 16 8 30 8h24c6 0 10-6 12-12v11a15 15 0 0 1-15 15H15A15 15 0 0 1 0 51z" fill="#dcc264" />
        <path d="M14 20c2-12 5-8 4 2s4 0 6-2 2 4 6 2 6 2 10 0" fill="none" stroke="#dcc66a" strokeWidth="2.4" />
        <path d="M12 34h40" stroke="#dcc66a" strokeWidth="4" />
        <path d="M12 46h20" stroke="#dcc66a" strokeWidth="4" />
      </Tile>
    ),
  },
  {
    dot: true,
    art: (
      <Tile fill="#1c2140">
        <path d="M6 44V18c0-6 2-9 8-10" fill="none" stroke="#e8523f" strokeWidth="2.5" />
        <path d="M20 6h26" stroke="#f2d23e" strokeWidth="3.5" />
        <path d="M60 44V18c0-6-2-9-8-10" fill="none" stroke="#5fd668" strokeWidth="2.5" />
        <path d="M6 46c0 8 4 12 10 12h34c6 0 10-4 10-12" fill="none" stroke="#5aa6f0" strokeWidth="3" />
        <path d="M24 14l9 17-9 20M42 14 33 31" stroke="#e4e6ee" strokeWidth="3" fill="none" />
        <circle cx="33" cy="31" r="4" fill="#cfd3e6" />
      </Tile>
    ),
  },
  {
    dot: true,
    art: (
      <Tile fill="#f4f7fa">
        <SiOpenai x="7" y="7" size={52} color="#2b2b2b" />
      </Tile>
    ),
  },
  { dot: true, art: <Tile fill="#fbfbfb"><ChromeWheel /></Tile> },
  {
    dot: true,
    art: (
      <TerminalScreen>
        <path d="M12 18h42M12 30h42M12 42h42M24 10v48M40 10v48" stroke="#2f4a42" strokeWidth="1" />
        <path d="M10 36h6l3-4 2-22 3 34 4-14 3-2 5 6 4-4 4 6h10" fill="none" stroke="#58c2a2" strokeWidth="1.6" />
      </TerminalScreen>
    ),
  },
  {
    dot: true,
    art: (
      <Tile fill="#fbfbfb">
        <ChromeWheel />
        <path d="M0 32 32 0h14L0 46z" fill="#3a68c6" />
        <text x="16" y="33" transform="rotate(-45 16 33)" fontFamily="Inter" fontWeight="700" fontSize="12" fill="#fff">BETA</text>
      </Tile>
    ),
  },
  {
    dot: true,
    art: (
      <Tile fill="#fff">
        <path d="M10 14c2 6 2 24 4 36 2 6 8 10 12 6 4-4-1-12 1-20 1-6 3-8 1-14-4-8-14-14-18-8z" fill="#3b2a22" />
        <path d="M28 10c10-8 24 4 20 16-2 8-6 12-6 22-2 4-10 4-14 0-3-10-4-28 0-38z" fill="#4a352b" />
        <circle cx="48" cy="48" r="14" fill="#6fbcc6" />
        <text x="48" y="54" textAnchor="middle" fontFamily="Inter" fontWeight="500" fontSize="15" fill="#fff">CE</text>
      </Tile>
    ),
  },
  {
    dot: true,
    art: (
      <Tile fill="#fff">
        <Grad id="dlogo" a="#a555d6" b="#5a3bd0" />
        <circle cx="30" cy="41" r="14" fill="none" stroke="url(#dlogo)" strokeWidth="10" />
        <rect x="39" y="12" width="10" height="43" rx="5" fill="url(#dlogo)" />
      </Tile>
    ),
  },
  {
    dot: true,
    art: (
      <TerminalScreen>
        <text x="11" y="30" fontFamily="Liberation Mono" fontSize="22" fill="#f2f2f2">&gt;</text>
        <path d="M24 32h8" stroke="#f2f2f2" strokeWidth="2.5" />
      </TerminalScreen>
    ),
  },
  {
    dot: true,
    art: (
      <Tile fill="#000">
        <path d="M33 8 14 28l19 4z" fill="#7c7c7c" />
        <path d="M33 8 52 28l-19 4z" fill="#4a4a4a" />
        <path d="M14 28h38L33 58z" fill="#ededed" />
        <path d="M14 28 33 58 26 40z" fill="#bdbdbd" />
        <path d="M52 28 33 58l-7-18z" fill="#8b8b8b" />
      </Tile>
    ),
  },
  {
    dot: true,
    art: (
      <Tile fill="#fff">
        <SiBrave x="7" y="6" size={52} color="#e2572b" />
      </Tile>
    ),
  },
  {
    dot: true,
    art: (
      <Tile fill="#f2f2f2">
        <Grad id="sea" a="#a4c2ec" b="#2a5a7c" />
        <rect x="5" y="5" width="56" height="55" rx="9" fill="url(#sea)" />
        <path d="M5 40c14-6 30-2 56 6v6a8 8 0 0 1-8 8H14a9 9 0 0 1-9-9z" fill="#2f4e68" />
        <rect x="38" y="36" width="22" height="13" rx="3" fill="#222" />
        <rect x="33" y="48" width="32" height="18" rx="6" fill="#cfd6dc" stroke="#555" strokeWidth="1" />
      </Tile>
    ),
  },
  {
    dot: true,
    art: (
      <Tile fill="#cf7450">
        {[0, 30, 60, 90, 120, 150, 180, 210, 240, 270, 300, 330].map((r) => (
          <path key={r} d="M33 33 31 7h4z" fill="#fbeee6" stroke="#fbeee6" strokeWidth="1.5" strokeLinejoin="round" transform={`rotate(${r} 33 33)`} />
        ))}
      </Tile>
    ),
  },
  { divider: true },
  {
    art: (
      <svg width="66" height="66" viewBox="0 0 66 66" style={{ display: "block" }}>
        <path d="M10 0h34l12 20v44H10z" fill="#f1f1ef" />
        <path d="M44 0c-2 10 2 18 12 20-6-4-10-10-12-20z" fill="#c8c8c4" />
      </svg>
    ),
  },
  {
    art: (
      <svg width="66" height="66" viewBox="0 0 66 66" style={{ display: "block" }}>
        <ellipse cx="33" cy="11" rx="27" ry="9" fill="#c7c9c7" stroke="#e6e6e6" strokeWidth="2" />
        <path d="M14 10 22 0l6 10 8-10 4 10 8-8 4 9z" fill="#9aa0a8" />
        <path d="M7 13c2 6 8 8 26 8s24-2 26-8l-5 47c-1 5-38 5-42 0z" fill="#dfe0dd" />
      </svg>
    ),
  },
];

const AppDock = () => (
  <Dock>
    {dockApps.map((app, i) =>
      app.divider ? (
        <DockDivider key={i} />
      ) : (
        <DockSlot key={i}>
          {app.art}
          {app.badge && <DockBadge $right={app.badgeRight}>{app.badge}</DockBadge>}
          {app.dot && <RunDot />}
        </DockSlot>
      )
    )}
  </Dock>
);

const tabs = [
  { title: "SandwichSync2 - Replit", icon: <ReplitMark />, sep: true },
  { title: "Sandwich Project Platform - Replit", icon: <ReplitMark /> },
  { title: "The Sandwich Project", icon: <FaGlobeAmericas size={28} />, active: true },
  { title: "The Sandwich Project", icon: <FaGlobeAmericas size={28} />, sep: true },
  { title: "Pulse · nicunursekatie/SandwichPlatform", icon: <FaGithub size={30} color="#24292f" />, sep: true, fade: true },
  { title: "Login - OpenAI", icon: <SiOpenai size={26} color="#111" />, sep: true },
];

const menus = ["File", "Edit", "View", "History", "Bookmarks", "Profiles", "Tab", "Window", "Help"];
const assignees = ["Marcy Louza", "Stephanie Luis", "Christine Cooper Nowicki", "Katie Long"];

export default function App() {
  return (
    <Screen>
      <GlobalStyle />
      <Foliage />
      <BackWindow>
        <BackLine $x={209} $y={24}>m/nicu</BackLine>
        <BackLine $x={22} $y={108}>git clone [https://github</BackLine>
      </BackWindow>

      <MenuBar>
        <FaApple size={32} />
        <MenuItems>
          <MenuItem $bold>Brave</MenuItem>
          {menus.map((m) => (
            <MenuItem key={m}>{m}</MenuItem>
          ))}
        </MenuItems>
        <StatusGroup>
          <StatusIcon $m={0}>{StatusIcons.wheel}</StatusIcon>
          <StatusIcon $m={40}>{StatusIcons.knot}</StatusIcon>
          <StatusIcon $m={32}><SiOpenai size={34} /></StatusIcon>
          <StatusIcon $m={31}>{StatusIcons.replay}</StatusIcon>
          <StatusText $m={10} $w={54} $size={28}>1:31</StatusText>
          <StatusText $m={8} $w={57} $size={28} $color="#5cb84f">71%</StatusText>
          <StatusIcon $m={37} $w={46}>{StatusIcons.cloud}</StatusIcon>
          <StatusIcon $m={34}>{StatusIcons.malware}</StatusIcon>
          <StatusIcon $m={35}>{StatusIcons.cat}</StatusIcon>
          <StatusIcon $m={30}>{StatusIcons.airdrop}</StatusIcon>
          <StatusIcon $m={30}><Bluetooth size={36} strokeWidth={1.6} /></StatusIcon>
          <StatusIcon $m={34}>{StatusIcons.wifi}</StatusIcon>
          <StatusText $m={37} $w={48} $size={22}>59%</StatusText>
          <StatusIcon $m={10} $w={50}>{StatusIcons.battery}</StatusIcon>
          <StatusIcon $m={32}><Search size={32} strokeWidth={2.4} /></StatusIcon>
          <StatusIcon $m={30}>{StatusIcons.control}</StatusIcon>
          <StatusIcon $m={28}>{StatusIcons.siri}</StatusIcon>
          <StatusText $m={28} $w={250}>Wed Jul 9&nbsp;&nbsp;10:36 AM</StatusText>
        </StatusGroup>
      </MenuBar>

      <BrowserWindow>
        <TabStrip>
          <TrafficLights>
            <Light $color="#ed6a5e" />
            <Light $color="#f4bf4f" />
            <Light $color="#61c554" />
          </TrafficLights>
          {tabs.map((t, i) => (
            <Tab key={i} $active={t.active} $sep={t.sep}>
              <Favicon>{t.icon}</Favicon>
              <TabTitle $fade={t.fade}>{t.title}</TabTitle>
              {t.active && <X size={24} color="#333" />}
            </Tab>
          ))}
          <NewTab><Plus size={28} strokeWidth={2} /></NewTab>
        </TabStrip>

        <Toolbar>
          <ToolIcon><ChevronLeft size={60} strokeWidth={1.2} /></ToolIcon>
          <ToolIcon $m={23} $color="#bdbdc2"><ChevronRight size={60} strokeWidth={1.2} /></ToolIcon>
          <ToolIcon $m={23}><RotateCw size={36} strokeWidth={1.8} /></ToolIcon>
          <ToolIcon $m={325}><Bookmark size={40} strokeWidth={1.7} /></ToolIcon>
          <UrlBar>
            <ToolIcon $w={30} $color="#444"><Settings2 size={28} strokeWidth={2} /></ToolIcon>
            <UrlText>bb1d30f8-d852-4bae-abcd-b7c4521e3d85-00-x9tsn55inx51.spock.replit.dev</UrlText>
            <UrlActions>
              <ToolIcon $w={32} $color="#48484c"><Share size={32} strokeWidth={2} /></ToolIcon>
              <ToolSep $m={17} />
              <ToolIcon $m={21}><SiBrave size={36} color="#ee5a25" /></ToolIcon>
              <ToolIcon $m={32}>
                <BatWrap>
                  <BatIcon />
                  <AlertBadge>1</AlertBadge>
                </BatWrap>
              </ToolIcon>
            </UrlActions>
          </UrlBar>
          <ToolIcon $m={212}><Puzzle size={34} strokeWidth={2} /></ToolIcon>
          <ToolIcon $m={22}><ReaderIcon /></ToolIcon>
          <ToolSep $m={32} />
          <ToolIcon $m={28}><Download size={34} strokeWidth={2} /></ToolIcon>
          <ToolIcon $m={23}><PanelRight size={34} strokeWidth={2} /></ToolIcon>
          <ToolIcon $m={24}><Wallet size={34} strokeWidth={2} /></ToolIcon>
          <ToolIcon $m={22}><SparkleIcon /></ToolIcon>
          <ToolIcon $m={25}><ShieldIcon /></ToolIcon>
          <ToolIcon $m={22}><Menu size={44} strokeWidth={1.6} /></ToolIcon>
        </Toolbar>

        <PreviewBanner>
          <span>
            This is a temporary development preview, and these links are not for public use. <a href="#deploy">Deploy your app</a> for secure sharing or use an invite link.
          </span>
          <X size={26} color="#cfd9e8" />
        </PreviewBanner>

        <AppBody>
          <Sidebar>
            <SectionLabel $mt={22}>COMMUNICATION</SectionLabel>
            <NavItem><MessageCircle size={32} strokeWidth={2} />Committee</NavItem>
            <NavItem><MessageCircle size={32} strokeWidth={2} />Messages</NavItem>
            <NavItem><Phone size={32} strokeWidth={2} />Directory</NavItem>
            <SectionLabel $mt={37}>RESOURCES</SectionLabel>
            <NavItem><FolderOpen size={32} strokeWidth={2} />Toolkit</NavItem>
            <NavItem><FileText size={32} strokeWidth={2} />Development</NavItem>
            <SectionLabel $mt={37}>ADMIN</SectionLabel>
          </Sidebar>

          <Main>
            <TeamCard>
              <TeamHeading><Users size={42} strokeWidth={2} />Project Team</TeamHeading>
              <MembersCount>0 members assigned</MembersCount>
              <EmptyState>
                <Users size={72} strokeWidth={1.9} />
                <EmptyText>No team members assigned</EmptyText>
              </EmptyState>
            </TeamCard>

            <TabsList>
              <TabButton $active>Tasks (1)</TabButton>
              <TabButton>Project Details</TabButton>
            </TabsList>

            <TasksHeader>
              <TasksTitle>Project Tasks</TasksTitle>
              <AddTaskButton><Plus size={32} strokeWidth={2} />Add Task</AddTaskButton>
            </TasksHeader>

            <TaskCard>
              <CheckBox />
              <TaskBody>
                <TitleRow>
                  <TaskTitle>Test out direct messaging</TaskTitle>
                  <PriorityPill>medium</PriorityPill>
                  <StatusPill><Pause size={28} strokeWidth={2.2} />Waiting</StatusPill>
                </TitleRow>
                <Description>Send a message to someone else on the platform and have them reply to it</Description>
                <AssigneeRow>
                  <User size={24} strokeWidth={2} />
                  {assignees.map((name) => (
                    <PersonChip key={name}>{name}<PersonEmoji /></PersonChip>
                  ))}
                  <DueDate><Calendar size={24} strokeWidth={2} />6/29/2025</DueDate>
                </AssigneeRow>

                <CompletionBox>
                  <CompletionTitle>Team Completion Status</CompletionTitle>
                  <ProgressLine><Users size={33} strokeWidth={2} color="#64748b" />Team Progress: 1/4</ProgressLine>
                  <MemberList>
                    {["Marcy Louza", "Stephanie Luis", "Christine Cooper Nowicki"].map((name) => (
                      <MemberRow key={name}>
                        <Circle size={33} strokeWidth={2} color="#9ca3af" />
                        <MemberName>{name}</MemberName>
                      </MemberRow>
                    ))}
                    <MemberRow $done>
                      <CircleCheck size={33} strokeWidth={2} color="#3fa34d" />
                      <MemberName $done>Katie Long (You)</MemberName>
                      <DonePill><Check size={24} strokeWidth={2.4} />Done</DonePill>
                    </MemberRow>
                  </MemberList>
                  <Divider />
                  <CompleteRow>
                    <MarkButton><Circle size={34} strokeWidth={2} />Mark Incomplete</MarkButton>
                    <MutedText>Completed 7/6/2025</MutedText>
                  </CompleteRow>
                  <LastActivity><Clock size={24} strokeWidth={2} />Last activity: 7/6/2025, 12:21:54 PM</LastActivity>
                </CompletionBox>
              </TaskBody>
              <TaskActions>
                <ActionButton $color="#b2aeac"><SquarePen size={32} strokeWidth={2} /></ActionButton>
                <ActionButton $color="#e59a96"><Trash2 size={32} strokeWidth={2} /></ActionButton>
              </TaskActions>
            </TaskCard>
          </Main>
        </AppBody>
      </BrowserWindow>

      <AppDock />
    </Screen>
  );
}
